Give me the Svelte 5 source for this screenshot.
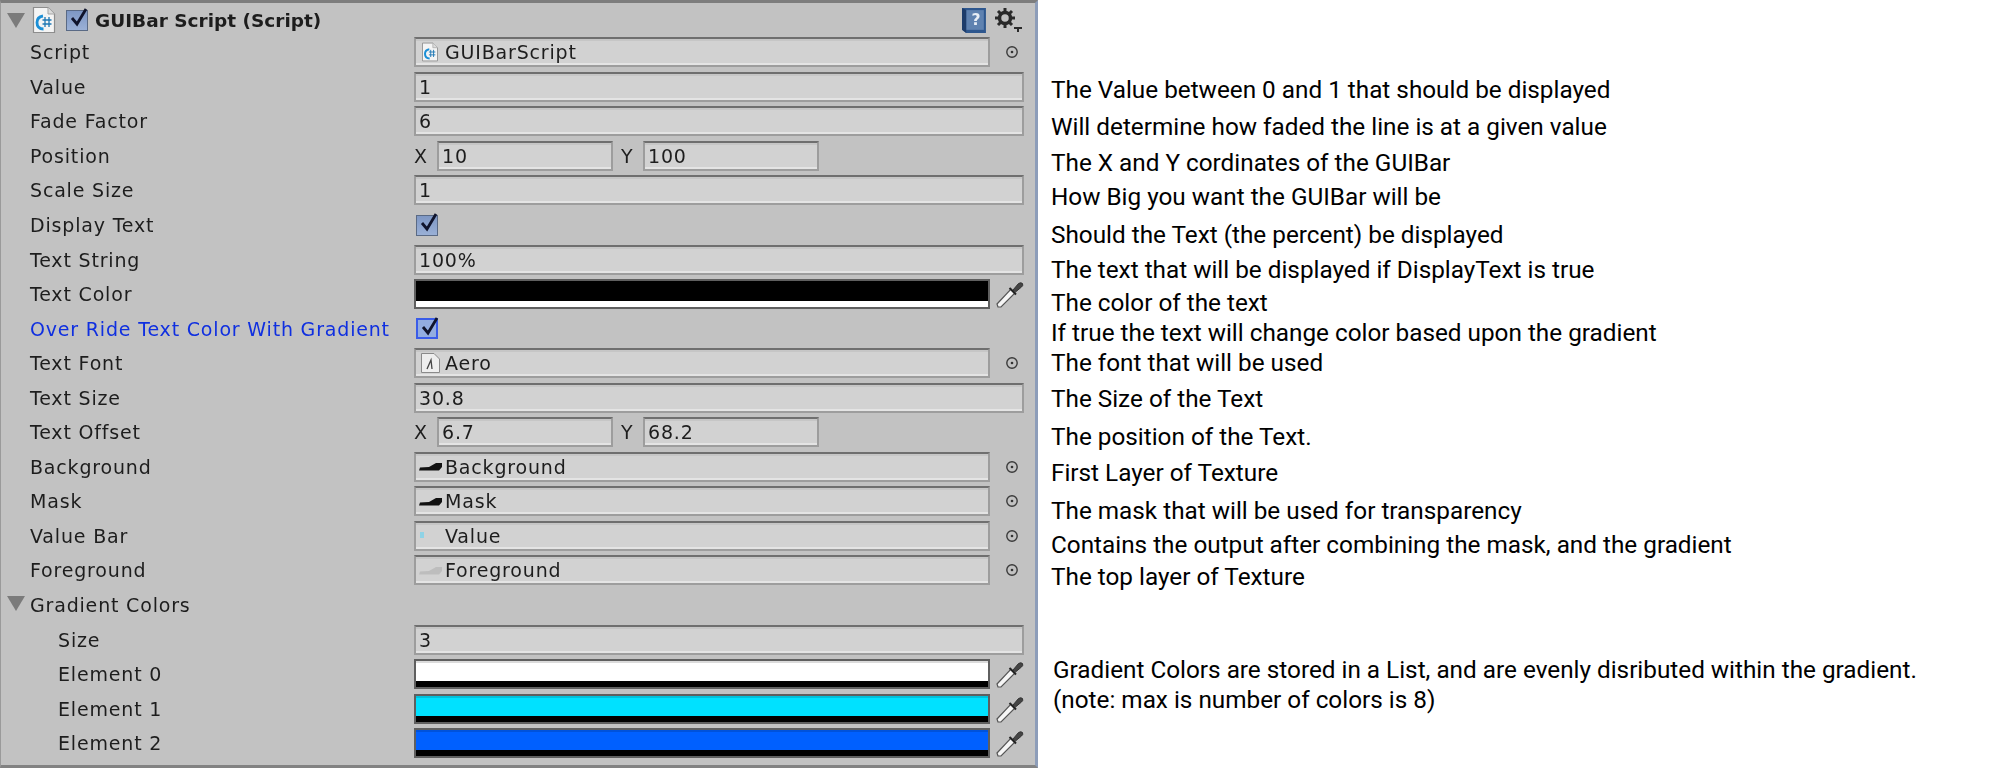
<script>
  const notes = [
    { y: 90, text: 'The Value between 0 and 1 that should be displayed' },
    { y: 127, text: 'Will determine how faded the line is at a given value' },
    { y: 163, text: 'The X and Y cordinates of the GUIBar' },
    { y: 197, text: 'How Big you want the GUIBar will be' },
    { y: 235, text: 'Should the Text (the percent) be displayed' },
    { y: 270, text: 'The text that will be displayed if DisplayText is true' },
    { y: 303, text: 'The color of the text' },
    { y: 333, text: 'If true the text will change color based upon the gradient' },
    { y: 363, text: 'The font that will be used' },
    { y: 399, text: 'The Size of the Text' },
    { y: 437, text: 'The position of the Text.' },
    { y: 473, text: 'First Layer of Texture' },
    { y: 511, text: 'The mask that will be used for transparency' },
    { y: 545, text: 'Contains the output after combining the mask, and the gradient' },
    { y: 577, text: 'The top layer of Texture' }
  ];
  const noteRows = notes.map((n, i) => ({ ...n, gap: i === 0 ? n.y - 14 : n.y - notes[i - 1].y - 28 }));
</script>

{#snippet target()}
  <svg class="target" viewBox="0 0 14 14"><circle cx="7" cy="7" r="5.2" fill="none" stroke="#3a3a3a" stroke-width="1.4"/><circle cx="7" cy="7" r="1.3" fill="#333"/></svg>
{/snippet}
{#snippet dropper()}
  <svg class="dropper" viewBox="0 0 30 30"><path d="M3 28 L2 25 L16 10 L20 14 L6 28 Z" fill="#f6f6f6" stroke="#555" stroke-width="1.2"/><path d="M14.500 9 L21 15.500" stroke="#222" stroke-width="2"/><path d="M18 11 L23.500 4.500 Q26 3 27.500 4.500 Q28.500 6.500 26.500 8 L20.500 13 Z" fill="#444" stroke="#333"/></svg>
{/snippet}
{#snippet check()}
  <svg class="checkmark" viewBox="0 0 20 22"><path d="M4 11 L9 17 L18 2" fill="none" stroke="#10142c" stroke-width="2.800"/></svg>
{/snippet}
{#snippet arrow()}
  <svg class="arrow" viewBox="0 0 18 15"><path d="M0 0 H18 L9 15 Z" fill="#7b7b7b"/></svg>
{/snippet}
{#snippet csIcon(cls)}
  <svg class={cls} viewBox="0 0 24 28"><path d="M1.500 1.500 H16 L22.500 8 V26.500 H1.500 Z" fill="#f4f4f4" stroke="#8d8d8d" stroke-width="1.200"/><path d="M16 1.500 V8 H22.500" fill="#dcdcdc" stroke="#a5a5a5"/><path d="M11 10 Q5 11 5 16.500 Q5 23 11.500 23" fill="none" stroke="#1b8fd6" stroke-width="2.800"/><path d="M10.500 14 H19.500 M10.500 18 H19.500 M13 11 V21 M17 11 V21" stroke="#1f78b4" stroke-width="1.300"/></svg>
{/snippet}
{#snippet tex(fill)}
  <svg class="tex" viewBox="0 0 23 9"><path d="M0 8.500 L1 5.500 L10 5 L17 1 H23 V5 L20 8.500 Z" fill={fill}/></svg>
{/snippet}

<main class="page">
  <section class="inspector">
    <header class="row head">
      <span class="head-arrow">{@render arrow()}</span>
      {@render csIcon('cs-big')}
      <span class="box head-box">{@render check()}</span>
      <strong class="title">GUIBar Script (Script)</strong>
      <svg class="book" viewBox="0 0 26 26"><path d="M1 1 H24 V25 H5 L1 22 Z" fill="#2e578e"/><path d="M5 3 H22 V22 H5 Z" fill="#5f82b0"/><path d="M1 1 L5 3 V25 L1 22 Z" fill="#1d3c6a"/><text x="10" y="17" class="book-q">?</text></svg>
      <svg class="gear" viewBox="0 0 28 24"><g fill="none" stroke="#2a2a2a"><circle cx="10" cy="10" r="5.500" stroke-width="3.500"/><path d="M10 0 V4 M10 16 V20 M0 10 H4 M16 10 H20 M3 3 L6 6 M14 14 L17 17 M17 3 L14 6 M3 17 L6 14" stroke-width="3"/></g><path d="M19 19 H27 V21 H24 V24 H22 V21 H19 Z" fill="#2a2a2a"/></svg>
    </header>

    <div class="row"><span class="label">Script</span><div class="obj"><span class="field f-obj">{@render csIcon('cs-small')}<span>GUIBarScript</span></span>{@render target()}</div></div>
    <div class="row"><span class="label">Value</span><span class="field">1</span></div>
    <div class="row"><span class="label">Fade Factor</span><span class="field">6</span></div>
    <div class="row"><span class="label">Position</span><div class="xy"><span class="axis">X</span><span class="field small">10</span><span class="axis y">Y</span><span class="field small">100</span></div></div>
    <div class="row"><span class="label">Scale Size</span><span class="field">1</span></div>
    <div class="row"><span class="label">Display Text</span><span class="box plain">{@render check()}</span></div>
    <div class="row"><span class="label">Text String</span><span class="field">100%</span></div>
    <div class="row"><span class="label">Text Color</span><div class="obj"><span class="color black"></span>{@render dropper()}</div></div>
    <div class="row"><span class="label blue">Over Ride Text Color With Gradient</span><span class="box focus">{@render check()}</span></div>
    <div class="row"><span class="label">Text Font</span><div class="obj"><span class="field f-obj"><svg class="font-ic" viewBox="0 0 19 20"><path d="M.5 .5 H13 L18.500 6 V19.500 H.5 Z" fill="#eee" stroke="#8a8a8a"/><path d="M6 16 L10 7 L11 16" fill="none" stroke="#444" stroke-width="1.300"/></svg><span>Aero</span></span>{@render target()}</div></div>
    <div class="row"><span class="label">Text Size</span><span class="field">30.8</span></div>
    <div class="row"><span class="label">Text Offset</span><div class="xy"><span class="axis">X</span><span class="field small">6.7</span><span class="axis y">Y</span><span class="field small">68.2</span></div></div>
    <div class="row"><span class="label">Background</span><div class="obj"><span class="field f-obj">{@render tex('#111')}<span>Background</span></span>{@render target()}</div></div>
    <div class="row"><span class="label">Mask</span><div class="obj"><span class="field f-obj">{@render tex('#111')}<span>Mask</span></span>{@render target()}</div></div>
    <div class="row"><span class="label">Value Bar</span><div class="obj"><span class="field f-obj"><svg class="tex" viewBox="0 0 23 9"><rect x="1" y="1" width="4" height="6" fill="#8fd3e6"/></svg><span>Value</span></span>{@render target()}</div></div>
    <div class="row"><span class="label">Foreground</span><div class="obj"><span class="field f-obj">{@render tex('#bdbdbd')}<span>Foreground</span></span>{@render target()}</div></div>
    <div class="row"><span class="head-arrow list-arrow">{@render arrow()}</span><span class="label">Gradient Colors</span></div>
    <div class="row"><span class="label nested">Size</span><span class="field">3</span></div>
    <div class="row"><span class="label nested">Element 0</span><div class="obj"><span class="color white"></span>{@render dropper()}</div></div>
    <div class="row"><span class="label nested">Element 1</span><div class="obj"><span class="color cyan"></span>{@render dropper()}</div></div>
    <div class="row"><span class="label nested">Element 2</span><div class="obj"><span class="color azure"></span>{@render dropper()}</div></div>
  </section>

  <aside class="notes">
    <ul>
      {#each noteRows as n}
        <li style="margin-top: {n.gap}px">{n.text}</li>
      {/each}
    </ul>
    <p>Gradient Colors are stored in a List, and are evenly disributed within the gradient.<br />(note: max is number of colors is 8)</p>
  </aside>
</main>

<style>
  :global(body) { margin: 0; background: #fff; }
  .page { display: flex; width: 2000px; height: 768px; overflow: hidden; }
  .inspector {
    box-sizing: border-box; width: 1038px; height: 768px; flex: none;
    background: #c2c2c2;
    border-top: 3px solid #7d7d7d; border-bottom: 3px solid #828282;
    border-left: 1px solid #9a9a9a; border-right: 3px solid #8d9db9;
    font-family: "DejaVu Sans", sans-serif; font-size: 19px; letter-spacing: .82px; color: #1d1d1d;
    display: grid; grid-template-rows: 32px; grid-auto-rows: 34.55px; filter: blur(.45px);
  }
  .row { display: flex; align-items: center; position: relative; padding-left: 29px; min-width: 0; }
  .head { padding-left: 6px; padding-top: 2px; }
  .head-arrow { display: flex; width: 18px; margin-right: 7px; }
  .list-arrow { position: absolute; left: 6px; top: 8px; margin: 0; }
  .arrow { width: 18px; height: 15px; }
  .cs-big { width: 24px; height: 28px; margin-right: 10px; }
  .cs-small { width: 18px; height: 20px; margin-right: 6px; flex: none; }
  .head-box { margin-right: 7px; width: 23px; height: 22px; }
  .title { font-weight: 700; font-size: 18.5px; letter-spacing: 0; flex: 1; }
  .book { width: 27px; height: 27px; margin-right: 7px; }
  .book-q { fill: #e8eef6; font: 700 15px "DejaVu Sans", sans-serif; }
  .gear { width: 28px; height: 24px; margin-right: 12px; }
  .label { width: 384px; flex: none; white-space: nowrap; }
  .label.nested { padding-left: 28px; width: 356px; }
  .blue { color: #0f2fe0; }
  .field {
    box-sizing: border-box; display: flex; align-items: center; height: 30px; width: 610px;
    background: #d2d2d2; padding-left: 3px; white-space: nowrap;
    border: 2px solid #9d9d9d; border-top-color: #6f6f6f;
    box-shadow: inset 0 -2px 0 #e4e4e4, inset 0 2px 0 #c6c6c6;
  }
  .obj { display: flex; align-items: center; width: 637px; }
  .f-obj { width: 576px; padding-left: 5px; }
  .target { width: 14px; height: 14px; margin-left: 15px; }
  .dropper { width: 30px; height: 30px; margin-left: 5px; }
  .xy { display: flex; align-items: center; }
  .axis { width: 23px; }
  .axis.y { width: 22px; margin-left: 8px; }
  .field.small { width: 176px; }
  .box {
    box-sizing: border-box; display: block; position: relative; width: 22px; height: 21px; margin-left: 2px;
    background: linear-gradient(#7e97c4, #9ab0d6); border: 1px solid #5a6a85; flex: none;
  }
  .head-box { margin-left: 0; }
  .box.focus { border: 2px solid #3a5ce8; background: #93ade0; }
  .checkmark { position: absolute; left: 1px; top: -4px; width: 20px; height: 22px; }
  .color { box-sizing: border-box; display: block; width: 576px; height: 30px; border: 2px solid #5f5f5f; position: relative; box-shadow: inset 0 2px 0 rgba(0, 0, 0, .14); }
  .color::after { content: ''; position: absolute; left: 0; right: 0; bottom: 0; height: 6px; }
  .black { background: #000; }
  .black::after { background: #fff; }
  .white { background: #fff; }
  .cyan { background: #00e1ff; }
  .azure { background: #0060ff; }
  .white::after, .cyan::after, .azure::after { background: #000; }
  .tex { width: 23px; height: 9px; margin: 0 3px 0 -2px; flex: none; }
  .font-ic { width: 19px; height: 20px; margin-right: 5px; flex: none; }
  .notes { flex: 1; font-family: Roboto, sans-serif; font-size: 24.3px; color: #000; padding-left: 13px; line-height: 28px; }
  ul { list-style: none; margin: 0; padding: 0; }
  p { margin: 0; position: absolute; left: 1053px; top: 655px; line-height: 29.500px; }
</style>
